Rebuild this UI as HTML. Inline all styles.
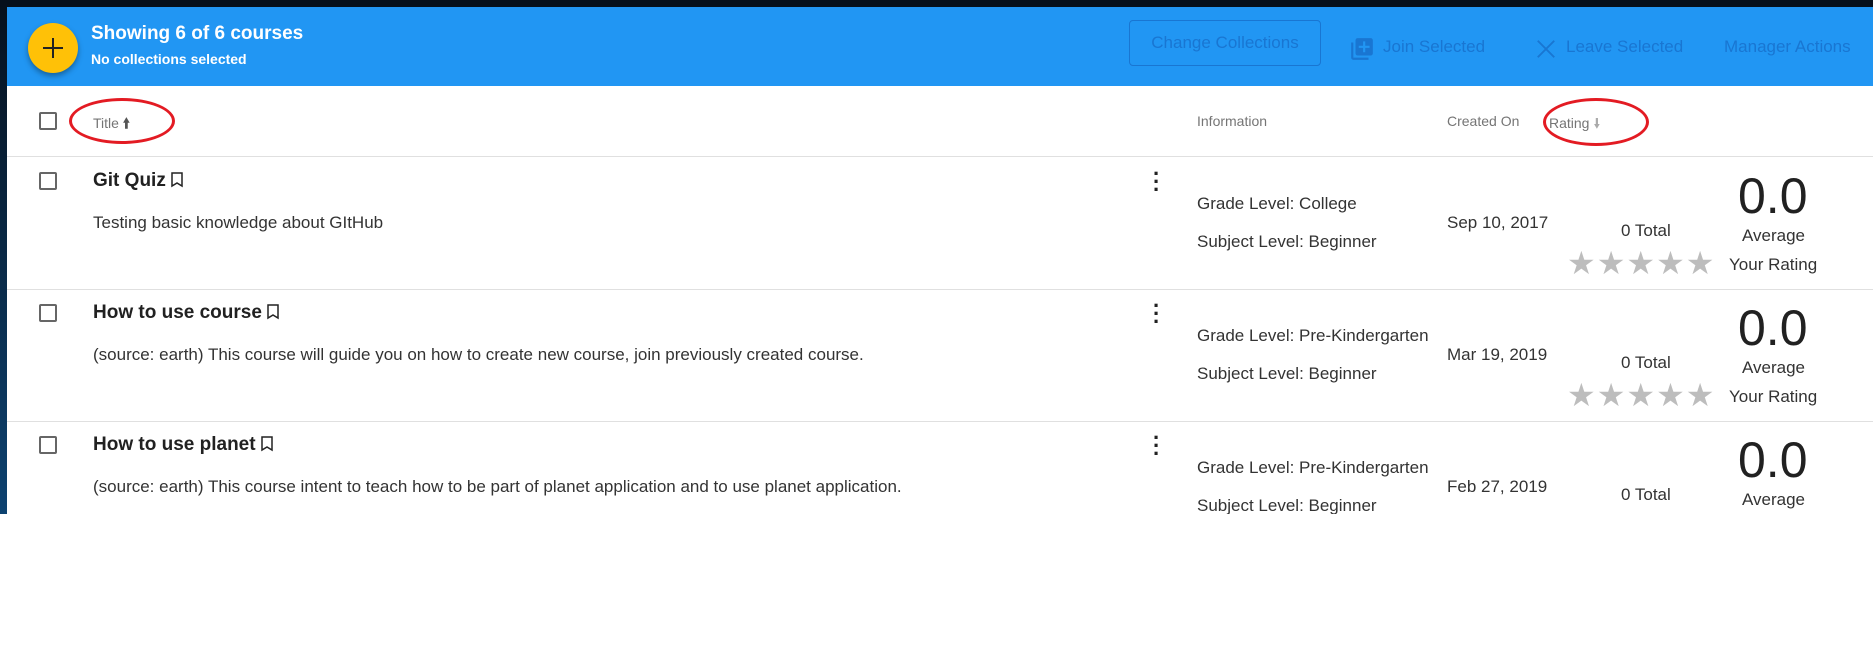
<!DOCTYPE html>
<html><head><style>
*{margin:0;padding:0;box-sizing:border-box}
body{width:1873px;height:648px;background:#fff;position:relative;overflow:hidden;font-family:"Liberation Sans",sans-serif;color:#212121}
.a{position:absolute;white-space:nowrap}
.dark{left:0;top:0;width:7px;height:514px;background:linear-gradient(#06101c,#0d4270)}
.topd{left:0;top:0;width:1873px;height:7px;background:#06101c}
.hdr{left:7px;top:7px;width:1866px;height:79px;background:#2196f3}
.cb{width:18px;height:18px;border:2px solid #666;border-radius:2px}
.h{font-size:14px;color:#757575}
.line{left:7px;width:1866px;height:1px;background:#e0e0e0}
.t{font-size:19px;font-weight:bold}
.d{font-size:17px;color:#333}
.i{font-size:17px;color:#333}
.big{font-size:50px;color:#212121}
.star{color:#bdbdbd;font-size:32px;letter-spacing:1px}
.ell{border:3px solid #e31b23;border-radius:50%}
.bm{display:inline-block;vertical-align:top;margin-left:4px;margin-top:2px}
</style></head><body>
<div class="a topd"></div>
<div class="a hdr"></div>
<div class="a dark"></div>
<div class="a" style="left:28px;top:23px;width:50px;height:50px;border-radius:50%;background:#ffc107;box-shadow:0 3px 6px rgba(0,0,0,.35)"></div>
<div class="a" style="left:43px;top:47px;width:20px;height:2px;background:#222"></div>
<div class="a" style="left:52px;top:38px;width:2px;height:20px;background:#222"></div>
<div class="a" style="left:91px;top:23px;color:#fff;font-size:19px;font-weight:bold">Showing 6 of 6 courses</div>
<div class="a" style="left:91px;top:51px;color:#fff;font-size:14px;font-weight:bold">No collections selected</div>
<div class="a" style="left:1129px;top:20px;width:192px;height:46px;border:1px solid #1976d2;border-radius:4px;color:#1976d2;font-size:17px;text-align:center;line-height:44px">Change Collections</div>
<svg class="a" style="left:1349px;top:36px" width="26" height="26" viewBox="0 0 24 24"><path fill="#1976d2" d="M4 6H2v14c0 1.1.9 2 2 2h14v-2H4V6zm16-4H8c-1.1 0-2 .9-2 2v12c0 1.1.9 2 2 2h12c1.1 0 2-.9 2-2V4c0-1.1-.9-2-2-2zm-1 9h-4v4h-2v-4H9V9h4V5h2v4h4v2z"/></svg>
<div class="a" style="left:1383px;top:37px;color:#1976d2;font-size:17px">Join Selected</div>
<svg class="a" style="left:1535px;top:38px" width="22" height="22" viewBox="0 0 24 24"><path stroke="#1976d2" stroke-width="2" d="M3 3L21 21M21 3L3 21"/></svg>
<div class="a" style="left:1566px;top:37px;color:#1976d2;font-size:17px">Leave Selected</div>
<div class="a" style="left:1724px;top:37px;color:#1976d2;font-size:17px">Manager Actions</div>

<div class="a cb" style="left:39px;top:112px"></div>
<div class="a h" style="left:93px;top:113px">Title <span style="font-weight:bold;color:#555">&#129049;</span></div>
<div class="a ell" style="left:69px;top:98px;width:106px;height:46px"></div>
<div class="a h" style="left:1197px;top:113px">Information</div>
<div class="a h" style="left:1447px;top:113px">Created On</div>
<div class="a h" style="left:1549px;top:113px">Rating <span style="color:#aaa">&#129051;</span></div>
<div class="a ell" style="left:1543px;top:98px;width:106px;height:48px"></div>
<div class="a line" style="top:156px"></div>

<div class="a cb" style="left:39px;top:172px"></div>
<div class="a t" style="left:93px;top:170px">Git Quiz<svg class="bm" width="14" height="16" viewBox="0 0 14 16"><path d="M2 1h10v13l-5-3-5 3z" fill="none" stroke="#222" stroke-width="1.5"/></svg></div>
<div class="a d" style="left:93px;top:213px">Testing basic knowledge about GItHub</div>
<div class="a" style="left:1153px;top:170px;font-size:22px;line-height:8px;font-weight:bold">·<br>·<br>·</div>
<div class="a i" style="left:1197px;top:194px">Grade Level: College</div>
<div class="a i" style="left:1197px;top:232px">Subject Level: Beginner</div>
<div class="a i" style="left:1447px;top:213px">Sep 10, 2017</div>
<div class="a i" style="left:1621px;top:221px">0 Total</div>
<div class="a big" style="left:1738px;top:167px">0.0</div>
<div class="a i" style="left:1742px;top:226px">Average</div>
<div class="a star" style="left:1567px;top:244px">★★★★★</div>
<div class="a i" style="left:1729px;top:255px">Your Rating</div>
<div class="a line" style="top:289px"></div>

<div class="a cb" style="left:39px;top:304px"></div>
<div class="a t" style="left:93px;top:302px">How to use course<svg class="bm" width="14" height="16" viewBox="0 0 14 16"><path d="M2 1h10v13l-5-3-5 3z" fill="none" stroke="#222" stroke-width="1.5"/></svg></div>
<div class="a d" style="left:93px;top:345px">(source: earth) This course will guide you on how to create new course, join previously created course.</div>
<div class="a" style="left:1153px;top:302px;font-size:22px;line-height:8px;font-weight:bold">·<br>·<br>·</div>
<div class="a i" style="left:1197px;top:326px">Grade Level: Pre-Kindergarten</div>
<div class="a i" style="left:1197px;top:364px">Subject Level: Beginner</div>
<div class="a i" style="left:1447px;top:345px">Mar 19, 2019</div>
<div class="a i" style="left:1621px;top:353px">0 Total</div>
<div class="a big" style="left:1738px;top:299px">0.0</div>
<div class="a i" style="left:1742px;top:358px">Average</div>
<div class="a star" style="left:1567px;top:376px">★★★★★</div>
<div class="a i" style="left:1729px;top:387px">Your Rating</div>
<div class="a line" style="top:421px"></div>

<div class="a cb" style="left:39px;top:436px"></div>
<div class="a t" style="left:93px;top:434px">How to use planet<svg class="bm" width="14" height="16" viewBox="0 0 14 16"><path d="M2 1h10v13l-5-3-5 3z" fill="none" stroke="#222" stroke-width="1.5"/></svg></div>
<div class="a d" style="left:93px;top:477px">(source: earth) This course intent to teach how to be part of planet application and to use planet application.</div>
<div class="a" style="left:1153px;top:434px;font-size:22px;line-height:8px;font-weight:bold">·<br>·<br>·</div>
<div class="a i" style="left:1197px;top:458px">Grade Level: Pre-Kindergarten</div>
<div class="a i" style="left:1447px;top:477px">Feb 27, 2019</div>
<div class="a i" style="left:1621px;top:485px">0 Total</div>
<div class="a big" style="left:1738px;top:431px">0.0</div>
<div class="a i" style="left:1742px;top:490px">Average</div>
<div style="position:absolute;left:0;top:514px;width:1873px;height:134px;background:#fff"></div>
<div class="a i" style="left:1197px;top:496px;height:18px;overflow:hidden">Subject Level: Beginner</div>
</body></html>
